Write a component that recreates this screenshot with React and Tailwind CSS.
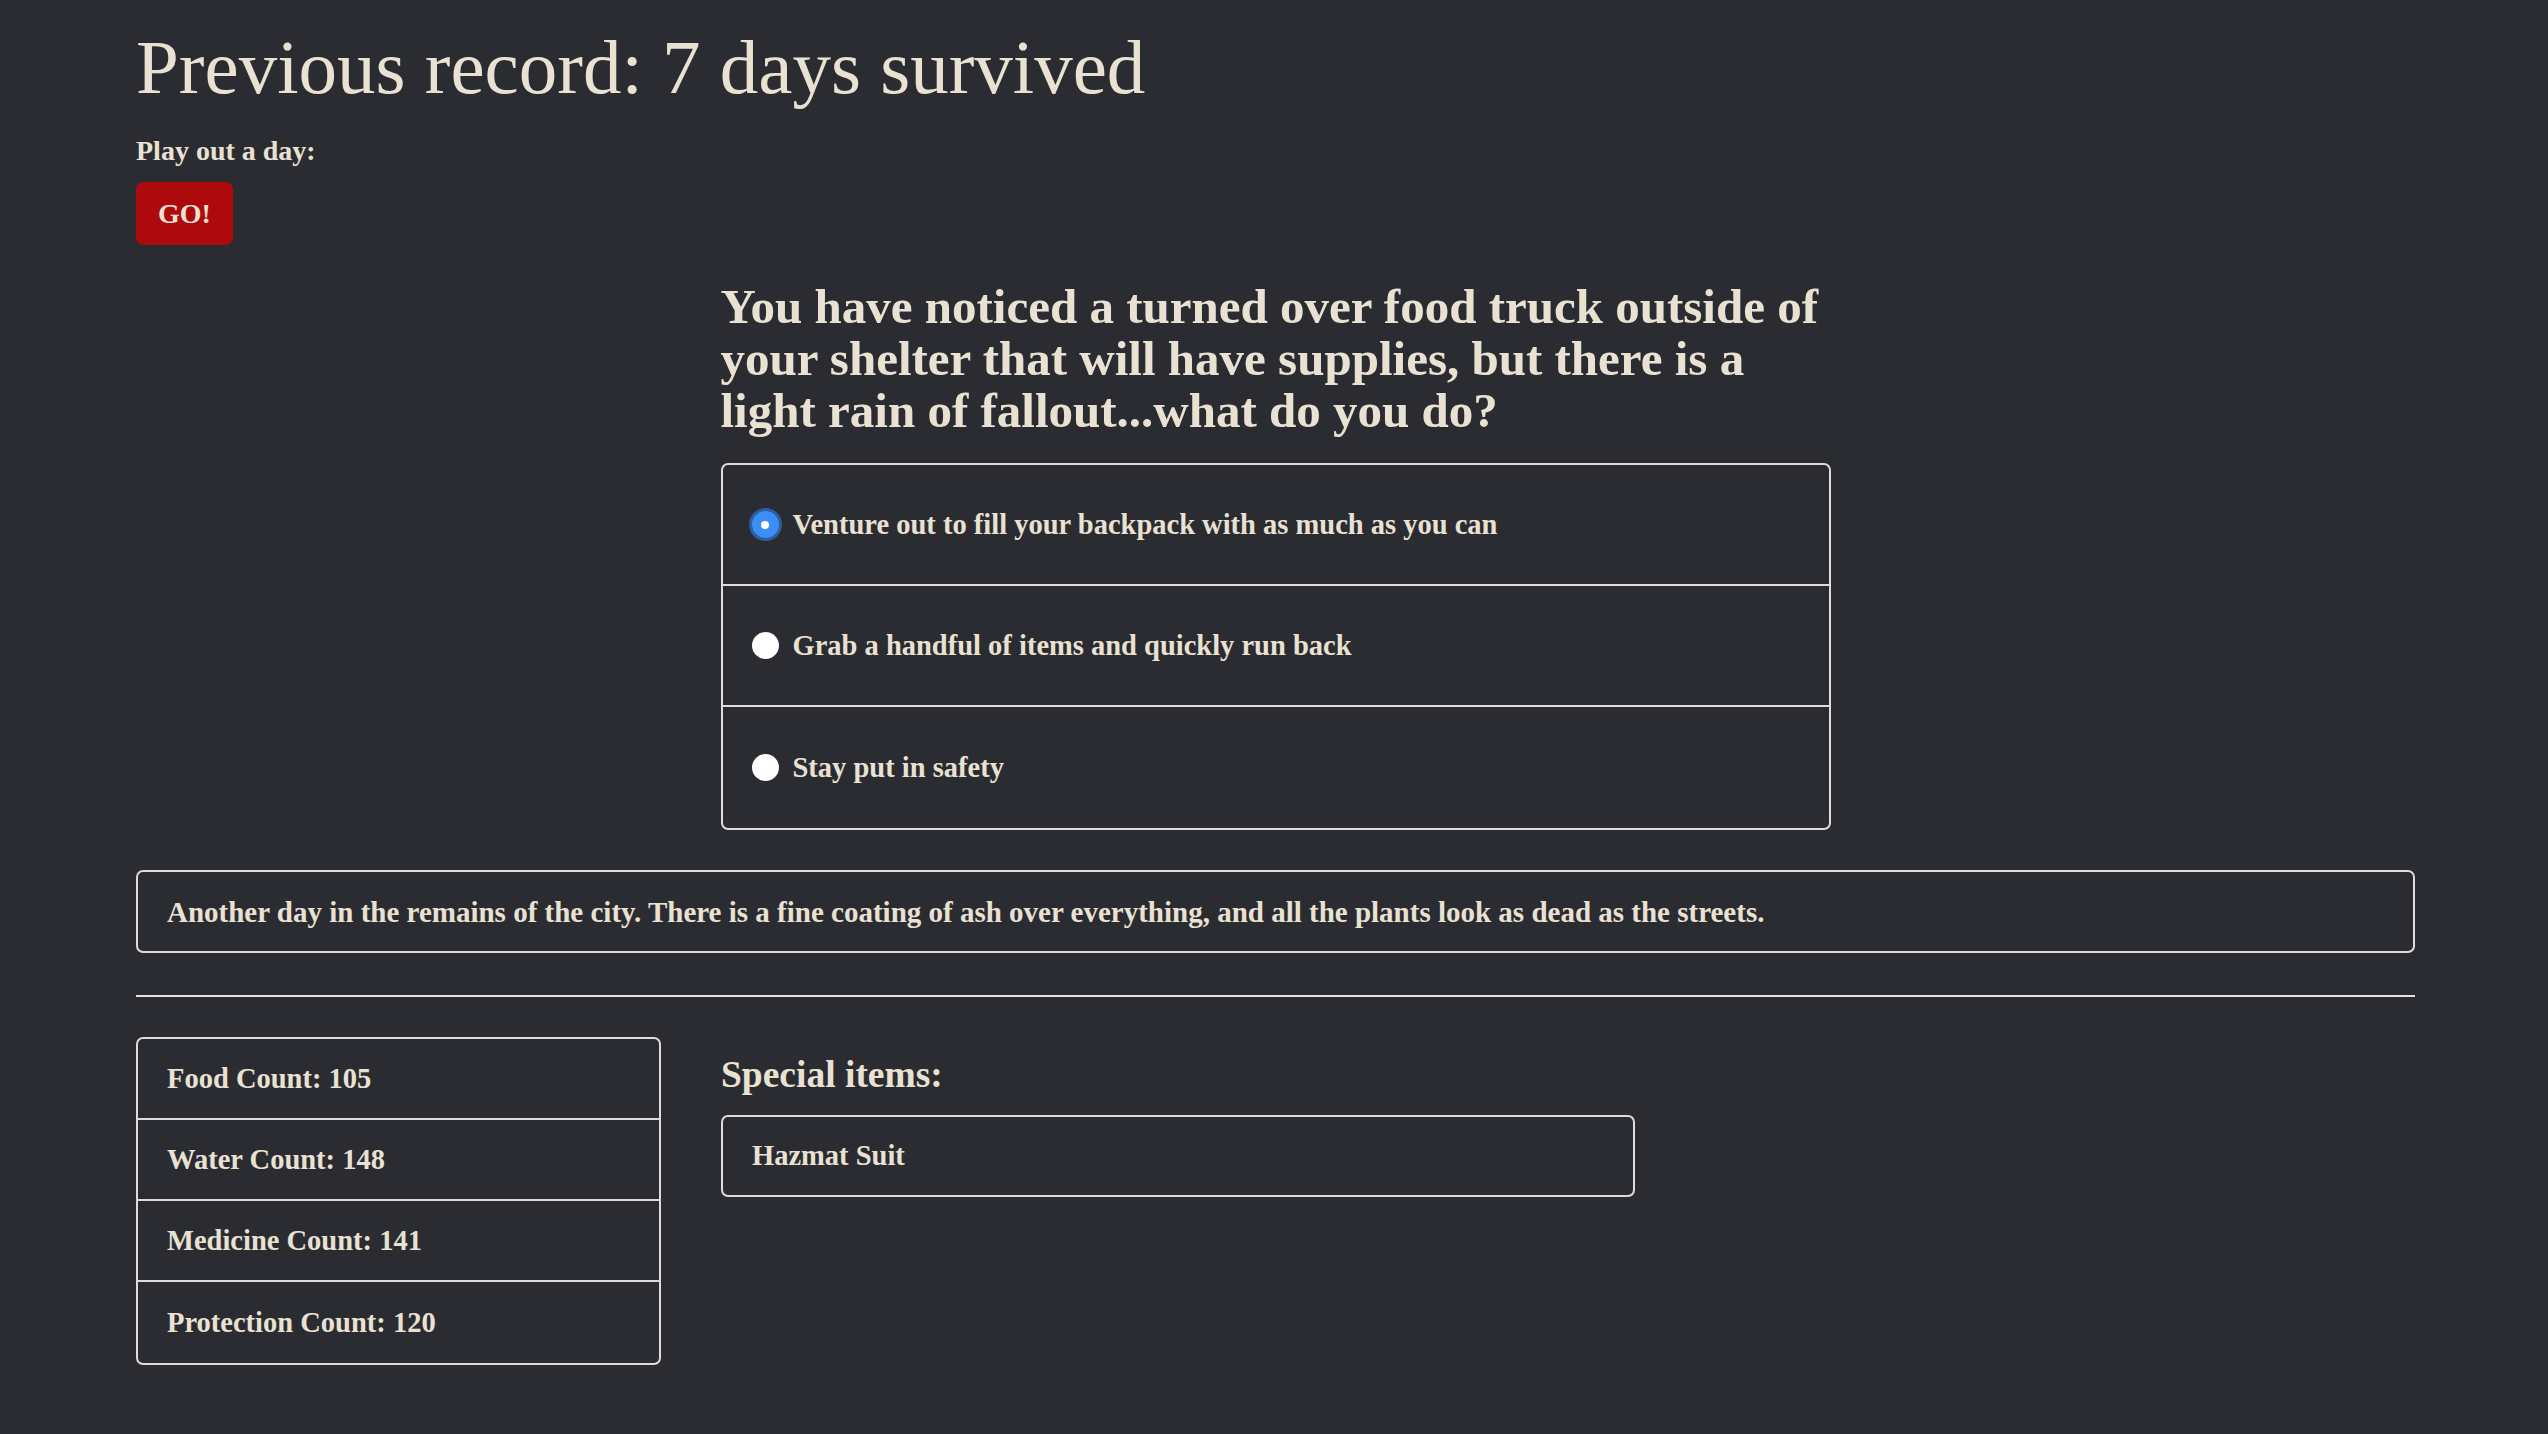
import React, { useState } from 'react'

const options = [
  'Venture out to fill your backpack with as much as you can',
  'Grab a handful of items and quickly run back',
  'Stay put in safety'
]

const stats = [
  { label: 'Food Count', value: 105 },
  { label: 'Water Count', value: 148 },
  { label: 'Medicine Count', value: 141 },
  { label: 'Protection Count', value: 120 }
]

const Radio = ({ checked }) => (
  <span className="w-[33px] h-[33px] flex items-center justify-center shrink-0">
    {checked ? (
      <span className="w-[33px] h-[33px] rounded-full bg-[#2d5f9f] p-[3px] flex">
        <span className="flex-1 rounded-full bg-[#3a8ef5] flex items-center justify-center">
          <span className="w-[8px] h-[8px] rounded-full bg-white" />
        </span>
      </span>
    ) : (
      <span className="w-[27px] h-[27px] rounded-full bg-white" />
    )}
  </span>
)

export default function App() {
  const [choice, setChoice] = useState(0)

  return (
    <div className="min-h-screen bg-[#2b2c32] text-[#e9e1d2] font-['Liberation_Serif',serif] pl-[136px] pr-[133px] pb-[60px]">
      {/* Header */}
      <h1 className="pt-[21px] text-[77px] leading-[92px] font-normal">Previous record: 7 days survived</h1>
      <p className="mt-[21px] text-[28px] leading-[34px] font-bold">Play out a day:</p>
      <button className="mt-[14px] h-[63px] px-[22px] rounded-[8px] bg-[#ae0a0e] text-[28px] leading-none font-bold flex items-center">
        GO!
      </button>

      {/* Question */}
      <div className="w-[1110px] mx-auto mt-[36px]">
        <h2 className="text-[49px] leading-[52px] font-bold">
          You have noticed a turned over food truck outside of your shelter that will have supplies, but there is a light rain of fallout...what do you do?
        </h2>
        <div className="mt-[26px] border-2 border-[#dcdcdc] rounded-[7px] flex flex-col divide-y-2 divide-[#dcdcdc]">
          {options.map((opt, i) => (
            <label
              key={i}
              onClick={() => setChoice(i)}
              className="h-[121px] flex items-center gap-[11px] pl-[26px] cursor-pointer"
            >
              <Radio checked={choice === i} />
              <span className="text-[28.5px] leading-[34px] font-bold">{opt}</span>
            </label>
          ))}
        </div>
      </div>

      {/* Event log */}
      <div className="mt-[40px] h-[83px] border-2 border-[#dcdcdc] rounded-[7px] flex items-center pl-[29px]">
        <p className="text-[29px] leading-[34px] font-bold">
          Another day in the remains of the city. There is a fine coating of ash over everything, and all the plants look as dead as the streets.
        </p>
      </div>

      <div className="mt-[42px] h-[2px] bg-[#e2e2e2]" />

      {/* Inventory */}
      <div className="mt-[40px] flex items-start gap-[60px]">
        <ul className="w-[525px] border-2 border-[#dcdcdc] rounded-[7px] divide-y-2 divide-[#dcdcdc]">
          {stats.map((s) => (
            <li key={s.label} className="h-[81px] flex items-center pl-[29px] text-[28.5px] leading-[34px] font-bold">
              {s.label}: {s.value}
            </li>
          ))}
        </ul>
        <div className="w-[914px]">
          <h3 className="mt-[16px] text-[37.5px] leading-[44px] font-bold">Special items:</h3>
          <div className="mt-[18px] h-[82px] border-2 border-[#dcdcdc] rounded-[7px] flex items-center pl-[29px]">
            <span className="text-[28.5px] leading-[34px] font-bold">Hazmat Suit</span>
          </div>
        </div>
      </div>
    </div>
  )
}
